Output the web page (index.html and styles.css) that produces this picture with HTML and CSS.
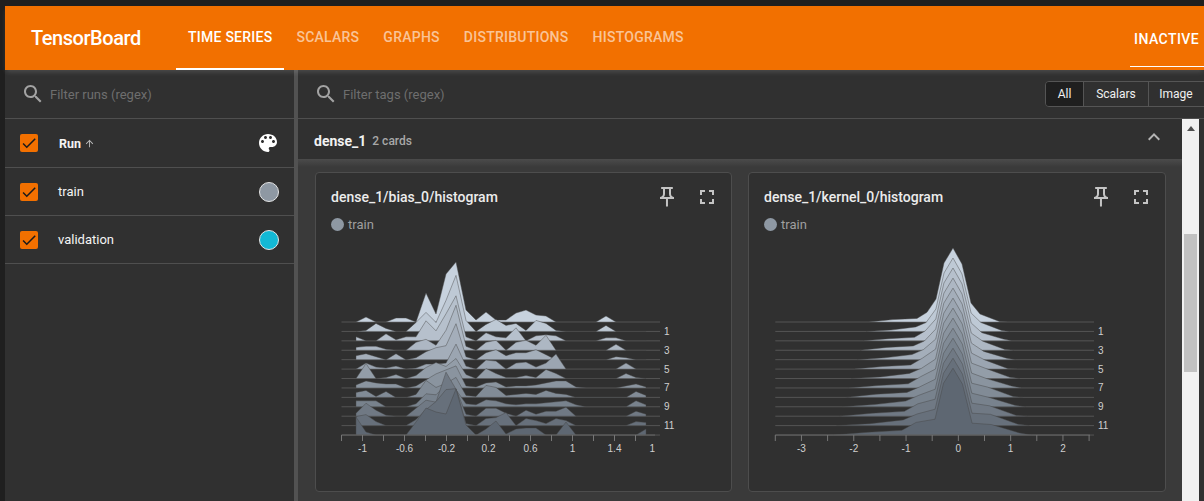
FILE: index.html
```html
<!DOCTYPE html>
<html lang="en">
<head>
  <meta charset="UTF-8" />
  <title>TensorBoard</title>
  <link rel="stylesheet" href="styles.css">
</head>
<body>

  <header class="topbar">
    <div class="logo">TensorBoard</div>
    <nav class="tabs">
      <a class="tab active">Time Series</a>
      <a class="tab">Scalars</a>
      <a class="tab">Graphs</a>
      <a class="tab">Distributions</a>
      <a class="tab">Histograms</a>
    </nav>
    <div class="plugin-select">Inactive</div>
  </header>

  <div class="layout">
    <!-- runs -->
    <aside class="sidebar">
      <div class="filter-bar">
        <svg class="search-icon" viewBox="0 0 24 24"><path d="M15.5 14h-.79l-.28-.27C15.41 12.59 16 11.11 16 9.5 16 5.91 13.09 3 9.5 3S3 5.91 3 9.5 5.91 16 9.5 16c1.61 0 3.09-.59 4.23-1.57l.27.28v.79l5 4.99L20.49 19l-4.99-5zm-6 0C7.01 14 5 11.99 5 9.5S7.01 5 9.5 5 14 7.01 14 9.5 11.99 14 9.5 14z"/></svg>
        <span class="placeholder">Filter runs (regex)</span>
      </div>
      <div class="run-row run-head">
        <span class="checkbox"><svg viewBox="0 0 24 24"><path d="M9 16.17L4.83 12l-1.42 1.41L9 19 21 7l-1.41-1.41z"/></svg></span>
        <span class="run-name">Run</span>
        <svg class="sort-icon" viewBox="0 0 24 24"><path d="M4 12l1.41 1.41L11 7.83V20h2V7.83l5.58 5.59L20 12l-8-8-8 8z"/></svg>
        <svg class="palette" viewBox="0 0 24 24"><path d="M12 3c-4.97 0-9 4.03-9 9s4.03 9 9 9c.83 0 1.5-.67 1.5-1.5 0-.39-.15-.74-.39-1.01-.23-.26-.38-.61-.38-.99 0-.83.67-1.5 1.5-1.5H16c2.76 0 5-2.24 5-5 0-4.42-4.03-8-9-8zm-5.5 9c-.83 0-1.5-.67-1.5-1.5S5.67 9 6.5 9 8 9.67 8 10.5 7.33 12 6.5 12zm3-4C8.67 8 8 7.33 8 6.5S8.67 5 9.5 5s1.5.67 1.5 1.5S10.33 8 9.5 8zm5 0c-.83 0-1.5-.67-1.5-1.5S13.67 5 14.5 5s1.5.67 1.5 1.5S15.33 8 14.5 8zm3 4c-.83 0-1.5-.67-1.5-1.5S16.67 9 17.5 9s1.5.67 1.5 1.5-.67 1.5-1.5 1.5z"/></svg>
      </div>
      <div class="run-row">
        <span class="checkbox"><svg viewBox="0 0 24 24"><path d="M9 16.17L4.83 12l-1.42 1.41L9 19 21 7l-1.41-1.41z"/></svg></span>
        <span class="run-name">train</span>
        <span class="swatch swatch-train"></span>
      </div>
      <div class="run-row">
        <span class="checkbox"><svg viewBox="0 0 24 24"><path d="M9 16.17L4.83 12l-1.42 1.41L9 19 21 7l-1.41-1.41z"/></svg></span>
        <span class="run-name">validation</span>
        <span class="swatch swatch-validation"></span>
      </div>
    </aside>

    <div class="divider"></div>

    <!-- cards -->
    <main class="main">
      <div class="filter-bar tags-bar">
        <svg class="search-icon" viewBox="0 0 24 24"><path d="M15.5 14h-.79l-.28-.27C15.41 12.59 16 11.11 16 9.5 16 5.91 13.09 3 9.5 3S3 5.91 3 9.5 5.91 16 9.5 16c1.61 0 3.09-.59 4.23-1.57l.27.28v.79l5 4.99L20.49 19l-4.99-5zm-6 0C7.01 14 5 11.99 5 9.5S7.01 5 9.5 5 14 7.01 14 9.5 11.99 14 9.5 14z"/></svg>
        <span class="placeholder">Filter tags (regex)</span>
        <div class="type-group">
          <span class="type-btn type-all selected">All</span>
          <span class="type-btn type-scalars">Scalars</span>
          <span class="type-btn type-image">Image</span>
        </div>
      </div>

      <div class="scroll-row">
        <div class="content">
          <div class="group-head">
            <span class="group-name">dense_1</span>
            <span class="group-count">2 cards</span>
            <svg class="chevron" viewBox="0 0 24 24"><path d="M12 8l-6 6 1.41 1.41L12 10.83l4.59 4.58L18 14z"/></svg>
          </div>
          <div class="cards">
            <section class="card">
              <div class="card-head">
                <span class="card-title">dense_1/bias_0/histogram</span>
                <span class="icon-btn"><svg viewBox="0 0 24 24"><path d="M14 4v5c0 1.12.37 2.16 1 3H9c.65-.86 1-1.9 1-3V4h4m3-2H7c-.55 0-1 .45-1 1s.45 1 1 1h1v5c0 1.66-1.34 3-3 3v2h5.97v7l1 1 1-1v-7H19v-2c-1.66 0-3-1.34-3-3V4h1c.55 0 1-.45 1-1s-.45-1-1-1z"/></svg></span>
                <span class="icon-btn"><svg viewBox="0 0 24 24"><path d="M7 14H5v5h5v-2H7v-3zm-2-4h2V7h3V5H5v5zm12 7h-3v2h5v-5h-2v3zM14 5v2h3v3h2V5h-5z"/></svg></span>
              </div>
              <div class="legend"><span class="legend-dot"></span>train</div>
              <div id="chartBias"></div>
            </section>
            <section class="card">
              <div class="card-head">
                <span class="card-title">dense_1/kernel_0/histogram</span>
                <span class="icon-btn"><svg viewBox="0 0 24 24"><path d="M14 4v5c0 1.12.37 2.16 1 3H9c.65-.86 1-1.9 1-3V4h4m3-2H7c-.55 0-1 .45-1 1s.45 1 1 1h1v5c0 1.66-1.34 3-3 3v2h5.97v7l1 1 1-1v-7H19v-2c-1.66 0-3-1.34-3-3V4h1c.55 0 1-.45 1-1s-.45-1-1-1z"/></svg></span>
                <span class="icon-btn"><svg viewBox="0 0 24 24"><path d="M7 14H5v5h5v-2H7v-3zm-2-4h2V7h3V5H5v5zm12 7h-3v2h5v-5h-2v3zM14 5v2h3v3h2V5h-5z"/></svg></span>
              </div>
              <div class="legend"><span class="legend-dot"></span>train</div>
              <div id="chartKernel"></div>
            </section>
          </div>
        </div>

        <div class="scrollbar">
          <div class="scroll-arrow"></div>
          <div class="scroll-thumb"></div>
        </div>
        <div class="edge"></div>
      </div>
    </main>
  </div>

  <script src="script.js"></script>
</body>
</html>
```

FILE: styles.css
```css
* {
  box-sizing: border-box;
}

html, body {
  height: 100%;
}

body {
  margin: 0;
  padding: 6px 0 0 5px;
  background-color: #1f1f1f;
  font-family: Roboto, "Liberation Sans", sans-serif;
  color: #fff;
  overflow: hidden;
  display: flex;
  flex-direction: column;
}

.topbar {
  flex: none;
  height: 64px;
  background-color: #f27000;
  display: flex;
  align-items: stretch;
  position: relative;
  z-index: 2;
  box-shadow: 0 3px 5px -1px rgba(255, 255, 255, 0.14);
}

.logo {
  font-size: 20px;
  font-weight: 500;
  letter-spacing: -0.45px;
  line-height: 64px;
  margin-left: 26px;
  width: 145px;
}

.tabs {
  display: flex;
}

.tab {
  padding: 0 12px;
  font-size: 14px;
  font-weight: 500;
  letter-spacing: 0.25px;
  text-transform: uppercase;
  line-height: 62px;
  color: rgba(255, 255, 255, 0.6);
}

.tab.active {
  color: #fff;
  border-bottom: 2px solid #fff;
}

.plugin-select {
  margin-left: auto;
  width: 74px;
  height: 61px;
  padding-left: 4px;
  line-height: 66px;
  font-size: 14px;
  font-weight: 500;
  letter-spacing: 0.45px;
  text-transform: uppercase;
  white-space: nowrap;
  border-bottom: 1px solid #fff;
}

.layout {
  flex: 1;
  min-height: 0;
  display: flex;
  background-color: #303030;
}

.sidebar {
  flex: none;
  width: 289px;
}

.divider {
  flex: none;
  width: 4px;
  background-color: #525252;
}

.main {
  flex: 1;
  min-width: 0;
  display: flex;
  flex-direction: column;
  overflow: hidden;
}

.filter-bar {
  height: 49px;
  display: flex;
  align-items: center;
  padding-left: 16px;
  border-bottom: 1px solid #4f4f4f;
}

.tags-bar {
  padding-left: 16px;
  flex: none;
}

.search-icon {
  width: 24px;
  height: 24px;
  fill: #a3a3a3;
  margin-right: 5px;
  flex: none;
}

.placeholder {
  font-size: 13px;
  color: #6e6e6e;
}

.type-group {
  margin-left: auto;
  margin-right: -7px;
  display: flex;
  height: 26px;
  border: 1px solid #555;
  border-radius: 4px;
  flex: none;
}

.type-btn {
  font-size: 12px;
  line-height: 24px;
  text-align: center;
  color: #f0f0f0;
  border-left: 1px solid #555;
}

.type-all {
  width: 37px;
  border-left: none;
  border-radius: 3px 0 0 3px;
}

.type-scalars {
  width: 65px;
}

.type-image {
  width: 62px;
  padding-right: 7px;
}

.selected {
  background-color: #1f1f1f;
}

.run-row {
  height: 48px;
  display: flex;
  align-items: center;
  padding: 0 15px;
  border-bottom: 1px solid #4f4f4f;
  font-size: 13px;
}

.run-head {
  height: 49px;
}

.checkbox {
  width: 18px;
  height: 18px;
  border-radius: 2px;
  background-color: #f27000;
  margin-right: 20px;
  flex: none;
  display: flex;
  align-items: center;
  justify-content: center;
}

.checkbox svg {
  width: 18px;
  height: 18px;
  fill: #1a1a1a;
}

.run-name {
  color: #f4f4f4;
}

.run-head .run-name {
  font-weight: 700;
  font-size: 12.5px;
  margin-left: 1px;
}

.sort-icon {
  width: 11px;
  height: 11px;
  fill: #bbb;
  margin-left: 3px;
}

.palette {
  width: 24px;
  height: 24px;
  fill: #fff;
  margin-left: auto;
  margin-right: -1px;
}

.swatch {
  width: 20px;
  height: 20px;
  border-radius: 50%;
  border: 1px solid #e4e4e4;
  margin-left: auto;
}

.swatch-train {
  background-color: #8e98a3;
}

.swatch-validation {
  background-color: #13b9d5;
}

.scroll-row {
  flex: 1;
  min-height: 0;
  display: flex;
}

.content {
  flex: 1;
  min-width: 0;
}

.group-head {
  height: 40px;
  display: flex;
  align-items: center;
  padding: 0 16px;
}

.group-name {
  font-size: 14px;
  font-weight: 700;
  color: #f2f2f2;
  margin-top: 3px;
}

.group-count {
  font-size: 12px;
  font-weight: 500;
  color: #a8a8a8;
  margin-left: 6px;
  margin-top: 4px;
}

.chevron {
  width: 24px;
  height: 24px;
  fill: #b5b5b5;
  margin-left: auto;
  margin-bottom: 5px;
}

.cards {
  height: 400px;
  padding: 13px 0 0 17px;
  display: grid;
  grid-template-columns: 417px 418px;
  align-items: start;
  gap: 16px;
  background: linear-gradient(#4b4b4b, #3a3a3a 8px);
}

.card {
  height: 320px;
  border: 1px solid #4d4d4d;
  border-radius: 4px;
  background-color: #303030;
  padding-top: 4px;
}

.card-head {
  height: 40px;
  display: flex;
  align-items: center;
  padding: 0 4px 0 15px;
}

.card-title {
  font-size: 14px;
  font-weight: 500;
  color: #ececec;
  margin-right: auto;
}

.icon-btn {
  width: 40px;
  height: 40px;
  display: flex;
  align-items: center;
  justify-content: center;
}

.icon-btn svg {
  width: 24px;
  height: 24px;
  fill: #c4c4c4;
}

.legend {
  height: 14px;
  display: flex;
  align-items: center;
  padding-left: 15px;
  font-size: 13px;
  color: #9f9f9f;
}

.legend-dot {
  width: 13px;
  height: 13px;
  border-radius: 50%;
  background-color: #8e98a3;
  margin-right: 4px;
}

.chart {
  display: block;
  margin-top: 9px;
}

.chart text {
  font-family: "Liberation Sans", Arial, sans-serif;
  font-size: 10px;
  fill: #cfcfcf;
}

.scrollbar {
  flex: none;
  width: 17px;
  background-color: #f1f1f1;
  padding: 7px 2px 0;
}

.scroll-arrow {
  width: 0;
  height: 0;
  margin: 0 auto;
  border-left: 4px solid transparent;
  border-right: 4px solid transparent;
  border-bottom: 5px solid #505050;
}

.scroll-thumb {
  height: 138px;
  margin-top: 103px;
  background-color: #c1c1c1;
}

.edge {
  flex: none;
  width: 5px;
}
```

FILE: script.js
```js
// y of each histogram step, back to front
const baselines = [];
for (let i = 0; i < 13; i++) {
  baselines.push(322 + i * 9.42);
}

// bias_0: bar heights per step, one bin every 10px from x=356
const biasSteps = [
  [0,5,0,0,4,4,0,29,8,48,60,12,2,10,2,2,9,12,7,6,0,0,0,0,0,6,0,0,0,0],
  [0,1,8,3,0,0,9,19,9,31,56,11,0,7,12,6,8,1,11,8,1,0,0,0,0,6,0,0,0,0],
  [4,0,0,7,1,4,4,20,10,27,45,4,0,8,4,3,13,0,5,6,5,0,0,0,0,3,3,0,0,0],
  [3,4,4,1,0,0,8,11,5,20,45,4,0,8,10,0,8,10,5,15,0,0,0,0,0,0,6,0,0,0],
  [4,6,3,0,6,0,2,8,12,14,36,3,0,7,10,4,7,7,10,5,0,0,0,0,0,0,3,2,0,0],
  [0,6,2,1,3,0,1,5,5,6,25,3,0,9,8,0,6,7,2,6,15,0,0,0,0,0,0,6,0,0],
  [0,15,0,1,4,0,3,11,16,12,20,4,0,10,5,1,1,3,1,9,5,0,0,0,0,0,0,5,1,0],
  [3,7,5,4,4,0,2,8,14,18,22,2,1,5,6,1,2,2,3,5,7,7,1,0,0,0,0,2,4,1],
  [5,7,1,6,0,0,3,17,10,14,20,2,1,12,10,2,3,4,3,7,4,3,0,0,0,0,0,0,6,2],
  [6,6,6,0,0,0,3,13,12,22,17,3,2,7,6,3,2,3,3,4,5,6,2,0,0,0,0,0,6,2],
  [3,13,6,1,0,0,8,16,14,44,27,2,0,8,8,3,0,6,2,5,5,9,0,0,0,0,0,0,5,2],
  [9,11,4,0,0,0,6,16,24,36,37,2,0,7,8,13,0,7,5,2,7,5,0,0,0,0,0,0,4,3],
  [18,3,0,0,0,0,13,27,23,21,46,10,0,6,14,1,6,7,7,0,0,13,0,0,0,0,0,0,0,6]
];

// kernel_0: one bell, offset from the peak x and height
const bell = [[-84,0],[-60,2],[-36,4],[-26,9],[-17,23],[-9,59],[0,74],[9,58],[18,19],[27,8],[47,1],[55,0]];

function stepColor(i) {
  const t = i / 12;
  const r = Math.round(199 + (94 - 199) * t);
  const g = Math.round(210 + (103 - 210) * t);
  const b = Math.round(222 + (114 - 222) * t);
  return `rgb(${r},${g},${b})`;
}

function biasPoints(i) {
  return biasSteps[i].map((h, k) => [356 + k * 10, h]);
}

function kernelPoints(i) {
  const spread = 1 + i * 0.035;
  return bell.map(([dx, h], j) => {
    const tail = Math.abs(dx) > 20;
    const wobble = tail && h > 0 ? ((i * 7 + j * 3) % 5 - 2) * 0.35 : 0;
    const x = 953 + (tail ? dx * spread : dx * (1 + i * 0.005));
    const y = tail ? h * (1 + i * 0.03) + wobble : h - i * 0.6;
    return [x, Math.max(y, 0)];
  });
}

function drawChart(el, opts) {
  let s = `<svg class="chart" width="416" height="240" viewBox="${opts.left} 240 416 240">`;
  s += `<defs><clipPath id="${opts.id}"><rect x="${opts.x0 - 10}" y="430" width="${opts.x1 - opts.x0 + 10}" height="40"/></clipPath></defs>`;

  baselines.forEach((y, i) => {
    s += `<line x1="${opts.x0}" x2="${opts.lineEnd}" y1="${y}" y2="${y}" stroke="#555"/>`;
    const pts = opts.points(i);
    const first = pts[0][0];
    const last = pts[pts.length - 1][0];
    const top = pts.map(p => `${p[0].toFixed(1)},${(y - p[1]).toFixed(1)}`).join(" ");
    s += `<polygon points="${first},${y} ${top} ${last},${y}" fill="${stepColor(i)}" stroke="rgba(70,70,70,.55)" stroke-width="0.8"/>`;
    if (i % 2 === 1) {
      s += `<text x="${opts.lineEnd + 4}" y="${y + 3.5}">${i}</text>`;
    }
  });

  // x axis
  const axisY = baselines[12];
  s += `<line x1="${opts.x0}" x2="${opts.x1}" y1="${axisY}" y2="${axisY}" stroke="#666"/>`;
  for (let n = 0; n < 16; n++) {
    const x = opts.x0 + n * opts.tick;
    if (x <= opts.x1) {
      s += `<line x1="${x}" x2="${x}" y1="${axisY}" y2="${axisY + 6}" stroke="#777"/>`;
    }
    // last label may hang over the axis end, the clip cuts it
    if (n % 2 === 1 && x <= opts.x1 + 5) {
      const label = opts.labels[(n - 1) / 2];
      s += `<text clip-path="url(#${opts.id})" x="${x}" y="452" text-anchor="middle">${label}</text>`;
    }
  }
  s += "</svg>";
  el.innerHTML = s;
}

drawChart(document.getElementById("chartBias"), {
  id: "clipBias",
  left: 316,
  x0: 341.5,
  x1: 655,
  lineEnd: 660,
  tick: 21,
  labels: ["-1", "-0.6", "-0.2", "0.2", "0.6", "1", "1.4", "1.8"],
  points: biasPoints
});

drawChart(document.getElementById("chartKernel"), {
  id: "clipKernel",
  left: 749,
  x0: 775.3,
  x1: 1090,
  lineEnd: 1094,
  tick: 26.15,
  labels: ["-3", "-2", "-1", "0", "1", "2", "3"],
  points: kernelPoints
});
```
